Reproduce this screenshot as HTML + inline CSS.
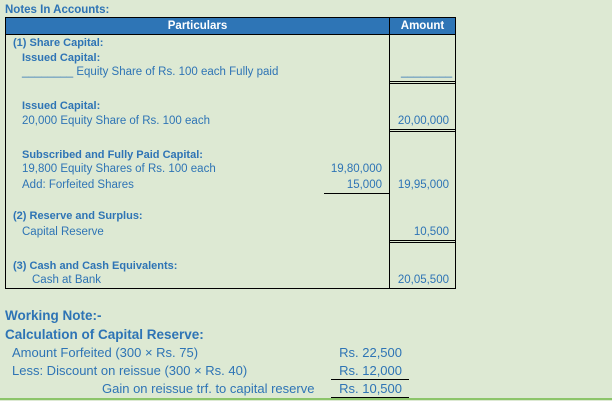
<!DOCTYPE html>
<html><head><style>
body{margin:0;width:612px;height:401px;background:#dde9d3;position:relative;overflow:hidden;font-family:"Liberation Sans",sans-serif;color:#2e74b5}
.t{position:absolute;white-space:nowrap;font-size:11.5px;line-height:13px}
.b{font-weight:bold;font-size:11px}
.r{text-align:right}
.l{position:absolute;background:#000}
.w{position:absolute;white-space:nowrap;font-size:13px;line-height:15px}
</style></head><body>
<div class="t b" style="left:5px;top:4px;font-size:11.5px">Notes In Accounts:</div>
<div style="position:absolute;left:5px;top:17px;width:451px;height:272px;border:1px solid #000;box-sizing:border-box"></div>
<div style="position:absolute;left:6px;top:18px;width:449px;height:16px;background:#2e75b6"></div>
<div class="l" style="left:5px;top:34px;width:451px;height:1px"></div>
<div class="l" style="left:389px;top:17px;width:1px;height:272px"></div>
<div class="t b" style="left:6px;top:20px;width:383px;text-align:center;color:#fff;font-size:11.5px">Particulars</div>
<div class="t b" style="left:390px;top:20px;width:65px;text-align:center;color:#fff;font-size:11.5px">Amount</div>

<div class="t b" style="left:13px;top:37px">(1) Share Capital:</div>
<div class="t b" style="left:22px;top:52px">Issued Capital:</div>
<div class="t" style="left:22px;top:66px">________ Equity Share of Rs. 100 each Fully paid</div>
<div class="t" style="left:401px;top:66px">________</div>
<div class="l" style="left:390px;top:81px;width:65px;height:1px"></div>
<div class="l" style="left:390px;top:83px;width:65px;height:1px"></div>

<div class="t b" style="left:22px;top:100px">Issued Capital:</div>
<div class="t" style="left:22px;top:115px">20,000 Equity Share of Rs. 100 each</div>
<div class="t r" style="left:380px;top:115px;width:69px">20,00,000</div>
<div class="l" style="left:390px;top:129px;width:65px;height:1px"></div>
<div class="l" style="left:390px;top:131px;width:65px;height:1px"></div>

<div class="t b" style="left:22px;top:149px">Subscribed and Fully Paid Capital:</div>
<div class="t" style="left:22px;top:163px">19,800 Equity Shares of Rs. 100 each</div>
<div class="t r" style="left:310px;top:163px;width:72px">19,80,000</div>
<div class="t" style="left:22px;top:179px">Add: Forfeited Shares</div>
<div class="t r" style="left:310px;top:179px;width:72px">15,000</div>
<div class="t r" style="left:380px;top:179px;width:69px">19,95,000</div>
<div class="l" style="left:324px;top:193px;width:65px;height:1px"></div>

<div class="t b" style="left:13px;top:210px">(2) Reserve and Surplus:</div>
<div class="t" style="left:22px;top:226px">Capital Reserve</div>
<div class="t r" style="left:380px;top:226px;width:69px">10,500</div>
<div class="l" style="left:390px;top:240px;width:65px;height:1px"></div>
<div class="l" style="left:390px;top:242px;width:65px;height:1px"></div>

<div class="t b" style="left:13px;top:260px">(3) Cash and Cash Equivalents:</div>
<div class="t" style="left:32px;top:274px">Cash at Bank</div>
<div class="t r" style="left:380px;top:274px;width:69px">20,05,500</div>

<div class="w b" style="left:5px;top:308px;font-size:13.5px">Working Note:-</div>
<div class="w b" style="left:5px;top:327px;font-size:13.5px">Calculation of Capital Reserve:</div>
<div class="w" style="left:12px;top:345px">Amount Forfeited (300 × Rs. 75)</div>
<div class="w r" style="left:320px;top:345px;width:82px">Rs. 22,500</div>
<div class="w" style="left:12px;top:363px">Less: Discount on reissue (300 × Rs. 40)</div>
<div class="w r" style="left:320px;top:363px;width:82px">Rs. 12,000</div>
<div class="l" style="left:331px;top:379px;width:78px;height:1px"></div>
<div class="w" style="left:102px;top:381px">Gain on reissue trf. to capital reserve</div>
<div class="w r" style="left:320px;top:381px;width:82px">Rs. 10,500</div>
<div class="l" style="left:331px;top:397px;width:78px;height:1px"></div>
<div style="position:absolute;left:0;top:398px;width:612px;height:2px;background:#8cc56a"></div>
</body></html>
